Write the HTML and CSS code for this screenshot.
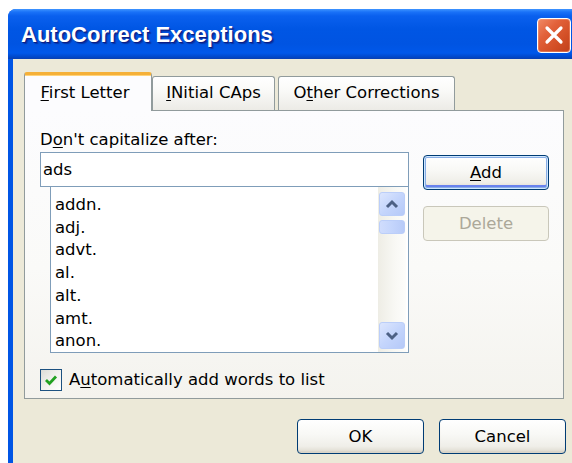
FILE: index.html
```html
<!DOCTYPE html>
<html lang="en">
<head>
<meta charset="utf-8">
<title>AutoCorrect Exceptions</title>
<link rel="stylesheet" href="styles.css">
</head>
<body>
<div class="window">
  <div class="titlebar">
    <span class="title">AutoCorrect Exceptions</span>
    <button class="close" aria-label="Close">
      <svg width="22" height="22" viewBox="0 0 22 22"><path d="M4 4 L18 18 M18 4 L4 18" stroke="#fff" stroke-width="3.2" stroke-linecap="round"/></svg>
    </button>
  </div>
  <div class="client">
    <div class="tabs">
      <div class="tab active t1"><span><u>F</u>irst Letter</span></div>
      <div class="tab t2"><span><u>I</u>Nitial CAps</span></div>
      <div class="tab t3"><span>O<u>t</u>her Corrections</span></div>
    </div>
    <div class="panel">
      <div class="label">D<u>o</u>n't capitalize after:</div>
      <div class="main">
        <div class="combo">
          <div class="entry">ads</div>
          <div class="list">
            <ul class="items">
              <li>addn.</li>
              <li>adj.</li>
              <li>advt.</li>
              <li>al.</li>
              <li>alt.</li>
              <li>amt.</li>
              <li>anon.</li>
            </ul>
            <div class="scrollbar">
              <div class="sb-btn up">
                <svg width="16" height="10" viewBox="0 0 16 10"><path d="M3 8 L8 3 L13 8" fill="none" stroke="#4D6185" stroke-width="3"/></svg>
              </div>
              <div class="sb-thumb"></div>
              <div class="sb-track"></div>
              <div class="sb-btn down">
                <svg width="16" height="10" viewBox="0 0 16 10"><path d="M3 2 L8 7 L13 2" fill="none" stroke="#4D6185" stroke-width="3"/></svg>
              </div>
            </div>
          </div>
        </div>
        <div class="side">
          <button class="btn default"><u>A</u>dd</button>
          <button class="btn disabled" disabled>Delete</button>
        </div>
      </div>
      <label class="check">
        <span class="box">
          <svg width="16" height="16" viewBox="0 0 16 16"><path d="M3 8 L6.5 11.5 L13 4.5" fill="none" stroke="#21A121" stroke-width="2.8"/></svg>
        </span>
        <span>A<u>u</u>tomatically add words to list</span>
      </label>
    </div>
    <div class="footer">
      <button class="btn">OK</button>
      <button class="btn">Cancel</button>
    </div>
  </div>
</div>
</body>
</html>
```

FILE: styles.css
```css
html, body {
  margin: 0;
  padding: 0;
  background: #ffffff;
  overflow: hidden;
}

body {
  width: 572px;
  height: 463px;
  font-family: "DejaVu Sans", "Liberation Sans", sans-serif;
  font-size: 16.5px;
  color: #000;
}

u {
  text-decoration-thickness: 1px;
  text-underline-offset: 2px;
}

/* window frame */
.window {
  margin: 9px 0 0 8px;
  width: 575px;
  height: 470px;
  display: flex;
  flex-direction: column;
  border-radius: 8px 8px 0 0;
  overflow: hidden;
  background: #0055E5;
}

.titlebar {
  height: 50px;
  flex: none;
  display: flex;
  align-items: center;
  justify-content: space-between;
  padding: 0 12px 0 13px;
  background: linear-gradient(to bottom,
    #3F95FF 0%, #1A72F8 6%, #0A60EE 14%, #0056E4 40%,
    #0054E2 70%, #0058EA 88%, #0047C9 96%, #0A3FB0 100%);
}

.title {
  font-family: "Liberation Sans", Arial, sans-serif;
  font-weight: bold;
  font-size: 22px;
  color: #fff;
  text-shadow: 1px 1px 0 #0B1D86, 2px 2px 1px rgba(10, 24, 110, 0.5);
  margin-top: 2px;
}

.close {
  width: 34px;
  height: 35px;
  padding: 0;
  margin-top: 2px;
  display: flex;
  align-items: center;
  justify-content: center;
  border: 1px solid #ffffff;
  border-radius: 4px;
  background: linear-gradient(135deg, #F08A66 0%, #E2613A 35%, #D24E25 70%, #C0401C 100%);
  box-shadow: inset 0 0 0 1px rgba(255, 180, 150, 0.35);
}

/* client area */
.client {
  flex: 1;
  margin: 0 5px 0 5px;
  background: #ECE9D8;
  padding: 13px 0 0 11px;
  display: flex;
  flex-direction: column;
}

/* tab strip */
.tabs {
  display: flex;
  align-items: flex-end;
  height: 39px;
  margin-bottom: -1px;
  position: relative;
  z-index: 1;
}

.tab {
  box-sizing: border-box;
  height: 34px;
  margin-bottom: 1px;
  border: 1px solid #919B9C;
  border-bottom: none;
  border-radius: 3px 3px 0 0;
  background: linear-gradient(to bottom, #FFFFFF 0%, #FAFAF8 40%, #ECEBE6 100%);
  display: flex;
  justify-content: center;
  padding-top: 6px;
  line-height: 20px;
  white-space: nowrap;
}

.tab.active {
  height: 39px;
  margin-bottom: 0;
  border-top: 3px solid #F5B038;
  box-shadow: inset 0 1px 0 #FFD37A;
  background: #FCFCFE;
  padding-top: 8px;
  padding-right: 6px;
}

.t1 { width: 128px; }
.t2 { width: 123px; }
.t3 { width: 177px; margin-left: 3px; }

/* tab page */
.panel {
  box-sizing: border-box;
  width: 540px;
  height: 289px;
  flex: none;
  border: 1px solid #919B9C;
  background: linear-gradient(to bottom, #FCFCFE 0%, #FAFAF8 55%, #F4F3EE 100%);
  padding: 19px 0 0 15px;
}

.label {
  line-height: 20px;
}

.main {
  display: flex;
  margin-top: 2px;
}

.combo {
  width: 369px;
}

.entry {
  box-sizing: border-box;
  height: 35px;
  border: 1px solid #7F9DB9;
  background: #fff;
  padding-left: 2px;
  line-height: 20px;
  display: flex;
  align-items: center;
}

.list {
  box-sizing: border-box;
  margin-left: 10px;
  height: 166px;
  border: 1px solid #7F9DB9;
  border-top: none;
  background: #fff;
  display: flex;
}

.items {
  list-style: none;
  margin: 0;
  padding: 7px 0 0 4px;
  flex: 1;
  line-height: 22.7px;
}

/* XP style scrollbar */
.scrollbar {
  width: 28px;
  margin-right: 2px;
  box-sizing: border-box;
  padding: 5px 1px 3px 1px;
  background: linear-gradient(to right, #EEEDE5, #F8F8F4 60%, #FDFDFB);
  display: flex;
  flex-direction: column;
}

.sb-btn {
  box-sizing: border-box;
  border: 1px solid #BBCEF9;
  border-radius: 3px;
  background: linear-gradient(135deg, #DCE6FE 0%, #C4D5FC 50%, #B5C9F8 100%);
  display: flex;
  align-items: center;
  justify-content: center;
}

.sb-btn.up { height: 24px; }
.sb-btn.down { height: 27px; }

.sb-thumb {
  height: 14px;
  margin-top: 4px;
  box-sizing: border-box;
  border: 1px solid #BBCEF9;
  border-radius: 3px;
  background: linear-gradient(to right, #D0DDFD, #C4D5FC 50%, #B8CBF8);
}

.sb-track {
  flex: 1;
}

.side {
  display: flex;
  flex-direction: column;
  margin-left: 14px;
  padding-top: 3px;
  gap: 16px;
}

/* push buttons */
.btn {
  box-sizing: border-box;
  width: 127px;
  height: 35px;
  padding: 0;
  font-family: "DejaVu Sans", "Liberation Sans", sans-serif;
  font-size: 16.5px;
  color: #000;
  border: 1px solid #003C74;
  border-radius: 4px;
  background: linear-gradient(to bottom, #FFFFFF 0%, #F8F8F5 45%, #EFEEE8 80%, #DCD8CC 100%);
  box-shadow: inset 0 -2px 1px rgba(214, 208, 197, 0.6);
}

.side .btn {
  width: 126px;
}

.btn.default {
  box-shadow: inset 0 0 0 1px #CEE7FF, inset 0 0 0 2px #89ADE4, inset 0 -2px 0 2px #6982EE;
}

.btn.disabled {
  border-color: #C9C7BA;
  background: #F5F4EA;
  color: #ACA899;
  box-shadow: none;
}

/* check box row */
.check {
  display: flex;
  align-items: center;
  gap: 7px;
  margin-top: 16px;
  line-height: 20px;
}

.box {
  box-sizing: border-box;
  width: 22px;
  height: 22px;
  border: 1px solid #1C5180;
  background: linear-gradient(135deg, #DCDCD7 0%, #F2F2EE 50%, #FFFFFF 100%);
  display: flex;
  align-items: center;
  justify-content: center;
}

.footer {
  width: 542px;
  display: flex;
  justify-content: flex-end;
  gap: 15px;
  margin-top: 20px;
}
```
